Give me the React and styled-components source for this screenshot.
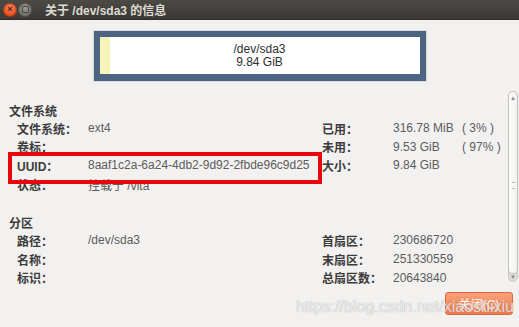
import React from 'react';
import styled, { createGlobalStyle } from 'styled-components';

const GlobalStyle = createGlobalStyle`
  html, body {
    margin: 0;
    padding: 0;
    background: #f2f1f0;
  }
  body {
    font-family: "Liberation Sans", "Noto Sans CJK SC", sans-serif;
  }
`;

const Window = styled.div`
  position: relative;
  width: 519px;
  height: 327px;
  overflow: hidden;
  display: flex;
  flex-direction: column;
  background: #f2f1f0;
`;

const TitleBar = styled.div`
  flex: none;
  height: 19px;
  display: flex;
  align-items: center;
  padding-left: 3px;
  background: linear-gradient(#4b4a45, #3a3935);
  border-bottom: 1px solid #2e2d2a;
`;

const WinButton = styled.div`
  width: 14px;
  height: 14px;
  margin-right: 1px;
  border-radius: 50%;
  display: flex;
  align-items: center;
  justify-content: center;
  font-size: 9px;
  font-weight: bold;
  line-height: 1;
  color: ${(p) => (p.$close ? '#5a1a08' : '#5c5b56')};
  background: ${(p) =>
    p.$close
      ? 'radial-gradient(circle at 50% 35%, #f7875c, #e0491d 70%)'
      : 'radial-gradient(circle at 50% 35%, #9a9892, #6e6c66 70%)'};
  box-shadow: inset 0 0 0 1px rgba(0, 0, 0, 0.25);
`;

const MinSquare = styled.div`
  width: 5px;
  height: 5px;
  border: 1px solid #4a4945;
  border-radius: 1px;
`;

const Title = styled.div`
  margin-left: 12px;
  font-size: 12px;
  font-weight: bold;
  color: #dfdbd2;
  white-space: nowrap;
`;

const GraphicRow = styled.div`
  flex: none;
  display: flex;
  justify-content: center;
  padding-top: 11px;
`;

const PartBox = styled.div`
  width: 320px;
  height: 37px;
  border: 6px solid #4b6582;
  border-bottom-width: 7px;
  display: flex;
  background: #fff;
  box-shadow: 0 0 0 1px #dcdad6;
`;

const UsedStrip = styled.div`
  width: 10px;
  background: #f6f4b7;
`;

const PartLabel = styled.div`
  flex: 1;
  display: flex;
  flex-direction: column;
  align-items: center;
  justify-content: center;
  font-size: 12px;
  line-height: 13px;
  color: #2e2e2e;
  padding-right: 10px;
  padding-top: 1px;
`;

const ScrollArea = styled.div`
  flex: none;
  margin-top: 10px;
  height: 191px;
  display: flex;
`;

const Content = styled.div`
  flex: 1;
  padding: 9px 0 0 9px;
`;

const Section = styled.section`
  & + & {
    margin-top: 19px;
  }
`;

const Heading = styled.div`
  height: 18.7px;
  display: flex;
  align-items: flex-end;
  line-height: 14px;
  font-size: 12px;
  font-weight: bold;
  color: #3a3a3a;
`;

const Row = styled.div`
  display: grid;
  grid-template-columns: 71px 234px 71px 69px auto;
  height: 18.7px;
  align-items: center;
  padding-left: 8px;
  font-size: 12px;
  white-space: pre;
`;

const Label = styled.span`
  font-weight: bold;
  color: #3c3c3c;
`;

const Value = styled.span`
  color: #5c5c5c;
`;

const Scrollbar = styled.div`
  width: 10px;
  margin-right: 1px;
  border-radius: 5px;
  background: #dedcd8;
  border: 1px solid #c9c7c3;
  box-sizing: border-box;
  display: flex;
  flex-direction: column;
  align-items: center;
`;

const Thumb = styled.div`
  width: 100%;
  height: 181px;
  border-radius: 5px;
  background: linear-gradient(90deg, #fdfdfc, #f1f0ee);
  box-shadow: 0 0 0 1px #c2c0bb;
  display: flex;
  flex-direction: column;
  align-items: center;
  justify-content: space-between;
  padding: 3px 0 4px;
  box-sizing: border-box;
`;

const Arrow = styled.div`
  font-size: 6px;
  line-height: 6px;
  color: #8a8884;
  margin-top: ${(p) => (p.$down ? '1px' : '0')};
`;

const Grip = styled.div`
  width: 3px;
  height: 5px;
  border-top: 1px solid #b8b6b1;
  border-bottom: 1px solid #b8b6b1;
`;

const ButtonRow = styled.div`
  flex: none;
  display: flex;
  justify-content: flex-end;
  padding: 10px 6px 0 0;
`;

const CloseButton = styled.button`
  width: 68px;
  height: 23px;
  border-radius: 3px;
  border: 1px solid #d9683e;
  background: linear-gradient(#f8a17a, #f07b51);
  color: #fff;
  font-family: inherit;
  font-size: 12px;
  padding: 0;
`;

const Highlight = styled.div`
  position: absolute;
  left: 8px;
  top: 152px;
  width: 314px;
  height: 32px;
  box-sizing: border-box;
  border: 4px solid #e8050b;
  pointer-events: none;
`;

const Watermark = styled.div`
  position: absolute;
  left: 296px;
  top: 297px;
  font-family: "Liberation Sans", sans-serif;
  font-size: 16px;
  line-height: 20px;
  color: rgba(255, 255, 255, 0.75);
  text-shadow: 0 0 1px rgba(90, 90, 90, 0.55);
  white-space: nowrap;
  pointer-events: none;
`;

const fsRows = [
  ['文件系统：', 'ext4', '已用：', '316.78 MiB', '( 3% )'],
  ['卷标：', '', '未用：', '9.53 GiB', '( 97% )'],
  ['UUID：', '8aaf1c2a-6a24-4db2-9d92-2fbde96c9d25', '大小：', '9.84 GiB', ''],
  ['状态：', '挂载于 /vita', '', '', ''],
];

const partRows = [
  ['路径：', '/dev/sda3', '首扇区：', '230686720', ''],
  ['名称：', '', '末扇区：', '251330559', ''],
  ['标识：', '', '总扇区数：', '20643840', ''],
];

const InfoRow = ({ cells }) => (
  <Row>
    <Label>{cells[0]}</Label>
    <Value>{cells[1]}</Value>
    <Label>{cells[2]}</Label>
    <Value>{cells[3]}</Value>
    <Value>{cells[4]}</Value>
  </Row>
);

const App = () => (
  <Window>
    <GlobalStyle />
    <TitleBar>
      <WinButton $close>×</WinButton>
      <WinButton>
        <MinSquare />
      </WinButton>
      <Title>关于 /dev/sda3 的信息</Title>
    </TitleBar>

    <GraphicRow>
      <PartBox>
        <UsedStrip />
        <PartLabel>
          <div>/dev/sda3</div>
          <div>9.84 GiB</div>
        </PartLabel>
      </PartBox>
    </GraphicRow>

    <ScrollArea>
      <Content>
        <Section>
          <Heading>文件系统</Heading>
          {fsRows.map((r) => (
            <InfoRow key={r[0]} cells={r} />
          ))}
        </Section>
        <Section>
          <Heading>分区</Heading>
          {partRows.map((r) => (
            <InfoRow key={r[0]} cells={r} />
          ))}
        </Section>
      </Content>
      <Scrollbar>
        <Thumb>
          <Arrow>▲</Arrow>
          <Grip />
          <span />
        </Thumb>
        <Arrow $down>▼</Arrow>
      </Scrollbar>
    </ScrollArea>

    <ButtonRow>
      <CloseButton>关闭(C)</CloseButton>
    </ButtonRow>

    <Highlight />
    <Watermark>https://blog.csdn.net/xiaoshixiu</Watermark>
  </Window>
);

export default App;
